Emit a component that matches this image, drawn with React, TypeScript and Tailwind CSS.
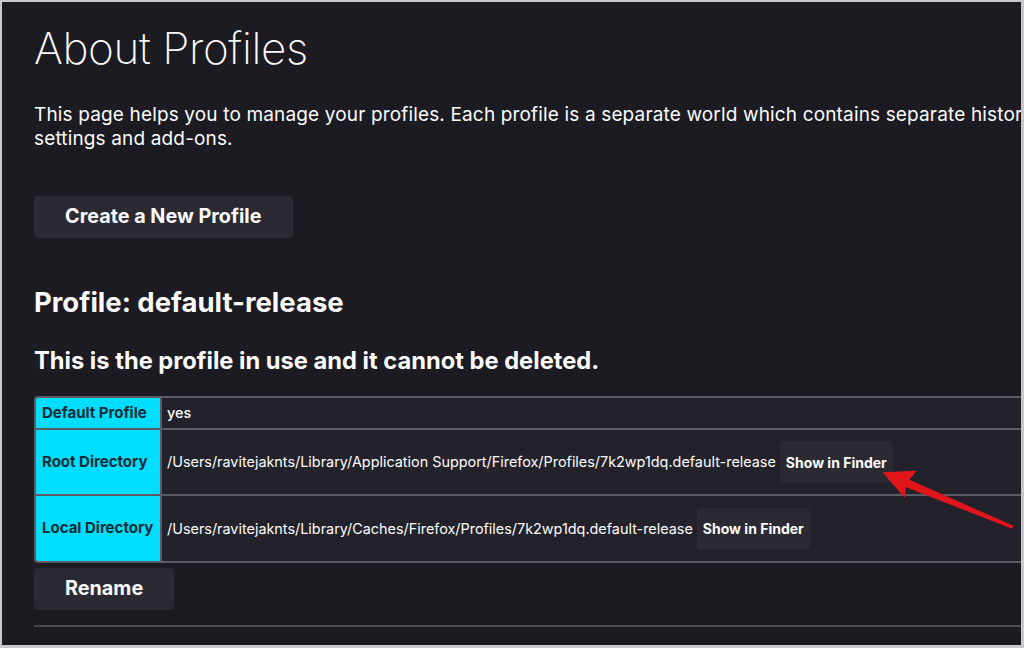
import React from "react";

const font = { fontFamily: "Inter, 'Noto Sans', sans-serif" };

function Btn({ children, className }: { children: React.ReactNode; className?: string }) {
  return (
    <button className={"bg-[#2b2a33] text-[#fbfbfe] font-bold rounded-[4px] " + (className || "")}>{children}</button>
  );
}

export default function App() {
  return (
    <div className="w-[1024px] h-[648px] overflow-hidden bg-[#c9c9cb] pt-[2px] pl-[2px] pr-[3px] pb-[3px]" style={font}>
      <div className="relative w-full h-full overflow-hidden bg-[#1c1b22] text-[#fbfbfe]">
        <div className="w-[1300px] pl-[32px] pt-[18px]">
          <h1 className="text-[44px] leading-[56px] font-extralight tracking-[-0.4px]">About Profiles</h1>
          <p className="mt-[27px] text-[19px] leading-[24px] tracking-[0.15px] whitespace-nowrap">
            This page helps you to manage your profiles. Each profile is a separate world which contains separate history, bookmarks,
            <br />
            settings and add-ons.
          </p>
          <Btn className="mt-[45px] h-[42px] px-[31px] text-[19.8px]">Create a New Profile</Btn>
          <h2 className="mt-[47px] text-[27.5px] leading-[34px] font-bold">Profile: default-release</h2>
          <h3 className="mt-[28px] text-[23.7px] leading-[28px] font-bold">This is the profile in use and it cannot be deleted.</h3>
          <table className="mt-[21px] w-[1100px] border-separate border-spacing-0 text-[14.4px]">
            <tbody>
              <tr>
                <th className="w-[126px] h-[34px] bg-[#00ddff] text-[#122a33] text-left font-bold text-[15px] px-[6px] border-2 border-r-0 border-[#5b5b66] rounded-tl-[4px]">Default Profile</th>
                <td className="bg-[#23222b] px-[5px] border-2 border-[#5b5b66] font-medium">yes</td>
              </tr>
              <tr>
                <th className="h-[66px] bg-[#00ddff] text-[#122a33] text-left font-bold text-[15px] px-[6px] border-2 border-t-0 border-r-0 border-[#5b5b66]">Root Directory</th>
                <td className="bg-[#23222b] px-[5px] border-2 border-t-0 border-[#5b5b66]">
                  <div className="flex items-center gap-[4px]">
                    <span>/Users/ravitejaknts/Library/Application Support/Firefox/Profiles/7k2wp1dq.default-release</span>
                    <Btn className="h-[42px] px-[6px] text-[14px]">Show in Finder</Btn>
                  </div>
                </td>
              </tr>
              <tr>
                <th className="h-[67px] bg-[#00ddff] text-[#122a33] text-left font-bold text-[15px] px-[6px] border-2 border-t-0 border-r-0 border-[#5b5b66] rounded-bl-[4px]">Local Directory</th>
                <td className="bg-[#23222b] px-[5px] border-2 border-t-0 border-[#5b5b66]">
                  <div className="flex items-center gap-[4px]">
                    <span>/Users/ravitejaknts/Library/Caches/Firefox/Profiles/7k2wp1dq.default-release</span>
                    <Btn className="h-[42px] px-[6px] text-[14px]">Show in Finder</Btn>
                  </div>
                </td>
              </tr>
            </tbody>
          </table>
          <Btn className="mt-[5px] h-[42px] px-[31px] text-[19.8px]">Rename</Btn>
          <div className="mt-[15px] h-[2px] bg-[#4a4950]" />
        </div>
        <svg className="absolute left-0 top-0 pointer-events-none" width="1024" height="648" viewBox="2 2 1024 648">
          <polygon
            points="884,473 915,471.5 908,480 1012.5,526.2 1011.5,527.8 905,486 904.5,496.5"
            fill="#e0161c"
            stroke="#e0161c"
            strokeWidth="1.5"
            strokeLinejoin="round"
          />
        </svg>
      </div>
    </div>
  );
}
